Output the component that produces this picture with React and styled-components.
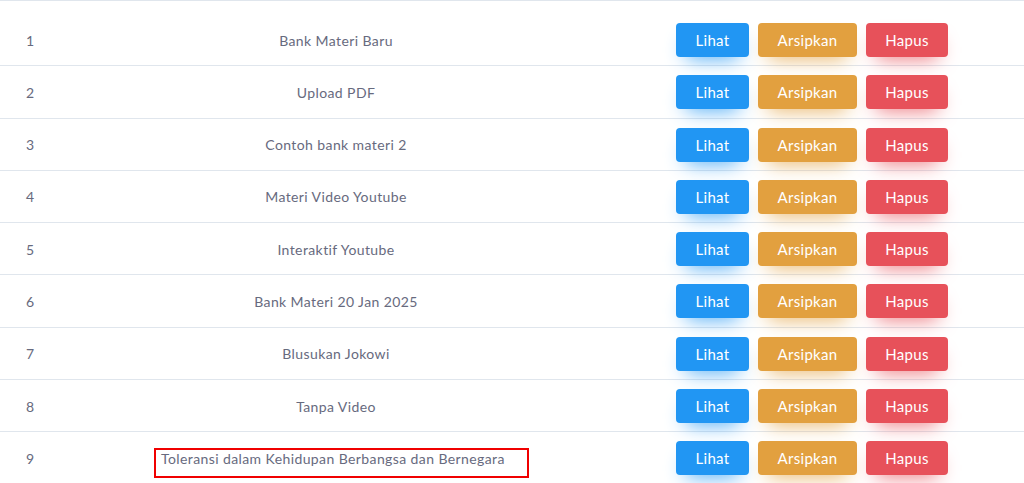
import styled, { createGlobalStyle } from "styled-components";

const rows = [
    "Bank Materi Baru",
    "Upload PDF",
    "Contoh bank materi 2",
    "Materi Video Youtube",
    "Interaktif Youtube",
    "Bank Materi 20 Jan 2025",
    "Blusukan Jokowi",
    "Tanpa Video",
    "Toleransi dalam Kehidupan Berbangsa dan Bernegara",
];

const colors = {
    info: "#2196f3",
    warning: "#e2a03f",
    danger: "#e7515a",
};

export default function App() {
    return (
        <>
            <Global />
            <Table>
                {rows.map((title, i) => (
                    <Row key={i} first={i === 0}>
                        <NumCell>{i + 1}</NumCell>
                        <TitleCell>
                            {i === rows.length - 1 ? (
                                <Highlight>{title}</Highlight>
                            ) : (
                                title
                            )}
                        </TitleCell>
                        <ActionCell>
                            <Button tone="info" w={73}>Lihat</Button>
                            <Button tone="warning" w={99}>Arsipkan</Button>
                            <Button tone="danger" w={82}>Hapus</Button>
                        </ActionCell>
                    </Row>
                ))}
            </Table>
        </>
    );
}

const Global = createGlobalStyle`
    body {
        margin: 0;
        background: #fff;
        font-family: "Lato", "Noto Sans", sans-serif;
        overflow: hidden;
    }
`;

const Table = styled.div`
    width: 1024px;
    padding-top: 1px;
    border-top: 1px solid #e0e6ed;
`;

const Row = styled.div`
    display: grid;
    grid-template-columns: 60px 552px 1fr;
    align-items: center;
    padding: ${(p) => (p.first ? "21px 0 8.3px" : "9px 0 8.3px")};
    border-bottom: 1px solid #e0e6ed;
    color: #676a7e;
    font-size: 14px;
    letter-spacing: 0.4px;
    white-space: nowrap;
`;

const NumCell = styled.div`
    padding-left: 26px;
`;

const TitleCell = styled.div`
    text-align: center;
`;

/* red annotation frame drawn over the last title */
const Highlight = styled.span`
    position: relative;
    top: 4px;
    display: inline-block;
    box-sizing: border-box;
    width: 375px;
    height: 30px;
    line-height: 18px;
    margin: -4px 0 -4px 11px;
    padding-left: 5px;
    border: 2px solid #f00000;
    text-align: left;
`;

const ActionCell = styled.div`
    display: flex;
    gap: 9px;
    padding-left: 64px;
`;

const Button = styled.button`
    width: ${(p) => p.w}px;
    height: 34px;
    border: none;
    border-radius: 4px;
    background: ${(p) => colors[p.tone]};
    box-shadow: 0 10px 20px -10px ${(p) => colors[p.tone]};
    color: #fff;
    font-family: inherit;
    font-size: 15px;
    letter-spacing: 0.3px;
    cursor: pointer;
`;
